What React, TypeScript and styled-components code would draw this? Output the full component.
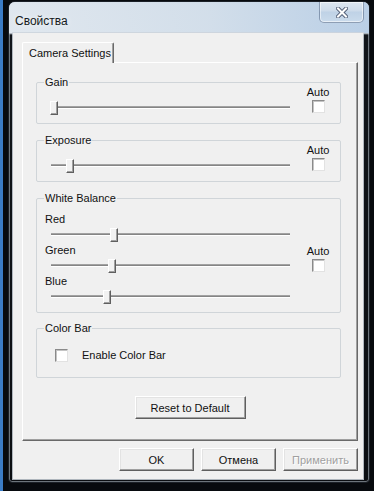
import React from "react";
import styled, { createGlobalStyle } from "styled-components";

const GlobalStyle = createGlobalStyle`
  html, body {
    margin: 0;
    padding: 0;
  }
  body {
    width: 374px;
    height: 491px;
    overflow: hidden;
    background: linear-gradient(to right, #3b7cc5 0 3px, #070a0e 3px);
    font-family: "Liberation Sans", Arial, sans-serif;
    font-size: 11px;
    color: #111;
  }
`;

// ----- Window frame -----

const Screen = styled.div`
  width: 374px;
  height: 491px;
  padding: 1px 0 0 8px;
  box-sizing: border-box;
`;

const Window = styled.div`
  width: 362px;
  height: 482px;
  box-sizing: border-box;
  border: 1px solid #1b2027;
  border-radius: 7px 7px 4px 4px;
  background: linear-gradient(to bottom, #d5dee7 0, #dbe4ec 31px, #11151a 33px, #0b0e12 100%);
  box-shadow: inset 0 0 0 1px rgba(190, 200, 210, 0.55);
  display: flex;
  flex-direction: column;
  overflow: hidden;
`;

const TitleBar = styled.div`
  height: 31px;
  flex-shrink: 0;
  display: flex;
  align-items: flex-start;
  justify-content: space-between;
  background: linear-gradient(to right, rgba(225, 232, 239, 0.9) 0, rgba(210, 222, 234, 0.9) 55%, rgba(184, 206, 230, 0.95) 100%);
`;

const Title = styled.span`
  margin: 12px 0 0 6px;
  font-size: 12px;
  color: #151a20;
  text-shadow: 0 0 6px rgba(255, 255, 255, 0.9);
`;

const CloseButton = styled.div`
  width: 45px;
  height: 22px;
  margin: -1px 5px 0 0;
  box-sizing: border-box;
  border: 1px solid rgba(90, 110, 140, 0.6);
  border-radius: 0 0 5px 5px;
  background: linear-gradient(to bottom, #dde7f1 0, #cddbea 45%, #bfd2e6 50%, #cadbec 100%);
  box-shadow: inset 0 0 0 1px rgba(255, 255, 255, 0.55);
  display: flex;
  align-items: center;
  justify-content: center;
`;

const Client = styled.div`
  flex: 1;
  margin: 0 6px 3px 4px;
  padding: 9px 5px 8px 9px;
  background: #f0f0f0;
  box-shadow: 0 0 0 1px rgba(205, 212, 220, 0.85);
  display: flex;
  flex-direction: column;
`;

// ----- Tab control -----

const TabStrip = styled.div`
  height: 20px;
  display: flex;
  position: relative;
  z-index: 1;
`;

const Tab = styled.div`
  width: 92px;
  height: 21px;
  box-sizing: border-box;
  padding: 4px 0 0 6px;
  background: #f0f0f0;
  border-top: 1px solid #fff;
  border-left: 1px solid #fff;
  border-right: 1px solid #696969;
  box-shadow: inset -1px 0 0 #a0a0a0;
  border-radius: 2px 2px 0 0;
  white-space: nowrap;
`;

const Panel = styled.div`
  flex: 1;
  background: #f0f0f0;
  border-top: 1px solid #fff;
  border-left: 1px solid #fff;
  border-right: 1px solid #696969;
  border-bottom: 1px solid #696969;
  box-shadow: inset -1px -1px 0 #a0a0a0;
  display: flex;
  flex-direction: column;
`;

// ----- Group boxes -----

const Group = styled.div<{ $top: number; $pt: number; $pb: number }>`
  position: relative;
  margin: ${(p) => p.$top}px 16px 0 13px;
  padding: ${(p) => p.$pt}px 9px ${(p) => p.$pb}px 14px;
  border: 1px solid #d0d5d9;
  border-radius: 2px;
  display: flex;
  align-items: center;
`;

const Legend = styled.span`
  position: absolute;
  top: -7px;
  left: 7px;
  padding: 0 1px;
  line-height: 13px;
  background: #f0f0f0;
`;

const SliderStack = styled.div`
  width: 239px;
  display: flex;
  flex-direction: column;
`;

const ChannelLabel = styled.div<{ $first?: boolean }>`
  line-height: 13px;
  margin: ${(p) => (p.$first ? 0 : 2)}px 0 2px -6px;
`;

const SliderBox = styled.div<{ $drop?: boolean }>`
  position: relative;
  width: 239px;
  height: 14px;
  flex-shrink: 0;
  align-self: flex-end;
  margin-bottom: ${(p) => (p.$drop ? -2 : 0)}px;
`;

const Track = styled.div`
  margin-top: 5px;
  height: 1px;
  background: #858585;
  border-top: 1px solid #a2a2a2;
  border-bottom: 1px solid #ffffff;
`;

const Thumb = styled.div`
  position: absolute;
  top: 0;
  width: 8px;
  height: 14px;
  box-sizing: border-box;
  background: #f2f2f2;
  border-top: 1px solid #fff;
  border-left: 1px solid #fff;
  border-right: 1px solid #5f5f5f;
  border-bottom: 1px solid #5f5f5f;
  box-shadow: inset -1px -1px 0 #a0a0a0;
`;

const AutoColumn = styled.div<{ $end?: boolean }>`
  width: 26px;
  margin-left: 15px;
  align-self: ${(p) => (p.$end ? "flex-end" : "center")};
  display: flex;
  flex-direction: column;
  align-items: center;
  gap: 1px;
`;

const AutoLabel = styled.span`
  line-height: 13px;
`;

const Check = styled.span`
  display: block;
  width: 13px;
  height: 13px;
  box-sizing: border-box;
  background: #fff;
  border-top: 1px solid #8a8a8a;
  border-left: 1px solid #8a8a8a;
  border-right: 1px solid #e2e2e2;
  border-bottom: 1px solid #e2e2e2;
  box-shadow: inset 1px 1px 0 #c4c4c4;
  flex-shrink: 0;
`;

const CheckRow = styled.label`
  margin-left: 4px;
  display: flex;
  align-items: center;
  gap: 14px;
  line-height: 13px;
`;

// ----- Buttons -----

const Button = styled.div<{ $w?: number; $disabled?: boolean }>`
  width: ${(p) => p.$w ?? 75}px;
  height: 23px;
  box-sizing: border-box;
  display: flex;
  align-items: center;
  justify-content: center;
  background: #f0f0f0;
  border-top: 1px solid #fff;
  border-left: 1px solid #fff;
  border-right: 1px solid #5f5f5f;
  border-bottom: 1px solid #5f5f5f;
  box-shadow: inset -1px -1px 0 #a0a0a0, inset 1px 1px 0 #e3e3e3;
  color: ${(p) => (p.$disabled ? "#a0a0a0" : "#111")};
  text-shadow: ${(p) => (p.$disabled ? "1px 1px 0 #fff" : "none")};
`;

const ResetRow = styled.div`
  margin-top: 18px;
  display: flex;
  justify-content: center;
`;

const ButtonRow = styled.div`
  margin-top: 7px;
  display: flex;
  justify-content: flex-end;
  gap: 7px;
`;

// ----- Data -----

const whiteBalance = [
  { name: "Red", value: 26 },
  { name: "Green", value: 25 },
  { name: "Blue", value: 23 },
];

const Slider = ({ value, drop }: { value: number; drop?: boolean }) => (
  <SliderBox $drop={drop}>
    <Track />
    <Thumb style={{ left: `calc((100% - 8px) * ${value / 100} - 1px)` }} />
  </SliderBox>
);

const Auto = ({ end }: { end?: boolean }) => (
  <AutoColumn $end={end}>
    <AutoLabel>Auto</AutoLabel>
    <Check />
  </AutoColumn>
);

const App = () => {
  return (
    <>
      <GlobalStyle />
      <Screen>
        <Window>
          <TitleBar>
            <Title>Свойства</Title>
            <CloseButton>
              <svg width="12" height="11" viewBox="0 0 12 11">
                <path d="M2 1.5 L10 9.5 M10 1.5 L2 9.5" stroke="#55627a" strokeWidth="4" strokeLinecap="square" />
                <path d="M2 1.5 L10 9.5 M10 1.5 L2 9.5" stroke="#ffffff" strokeWidth="2" strokeLinecap="square" />
              </svg>
            </CloseButton>
          </TitleBar>
          <Client>
            <TabStrip>
              <Tab>Camera Settings</Tab>
            </TabStrip>
            <Panel>
              <Group $top={19} $pt={3} $pb={10}>
                <Legend>Gain</Legend>
                <Slider value={0} drop />
                <Auto end />
              </Group>
              <Group $top={16} $pt={3} $pb={10}>
                <Legend>Exposure</Legend>
                <Slider value={7} drop />
                <Auto end />
              </Group>
              <Group $top={16} $pt={14} $pb={8}>
                <Legend>White Balance</Legend>
                <SliderStack>
                  {whiteBalance.map((c, i) => (
                    <React.Fragment key={c.name}>
                      <ChannelLabel $first={i === 0}>{c.name}</ChannelLabel>
                      <Slider value={c.value} />
                    </React.Fragment>
                  ))}
                </SliderStack>
                <Auto />
              </Group>
              <Group $top={15} $pt={20} $pb={15}>
                <Legend>Color Bar</Legend>
                <CheckRow>
                  <Check />
                  Enable Color Bar
                </CheckRow>
              </Group>
              <ResetRow>
                <Button $w={111}>Reset to Default</Button>
              </ResetRow>
            </Panel>
            <ButtonRow>
              <Button>OK</Button>
              <Button>Отмена</Button>
              <Button $disabled>Применить</Button>
            </ButtonRow>
          </Client>
        </Window>
      </Screen>
    </>
  );
};

export default App;
